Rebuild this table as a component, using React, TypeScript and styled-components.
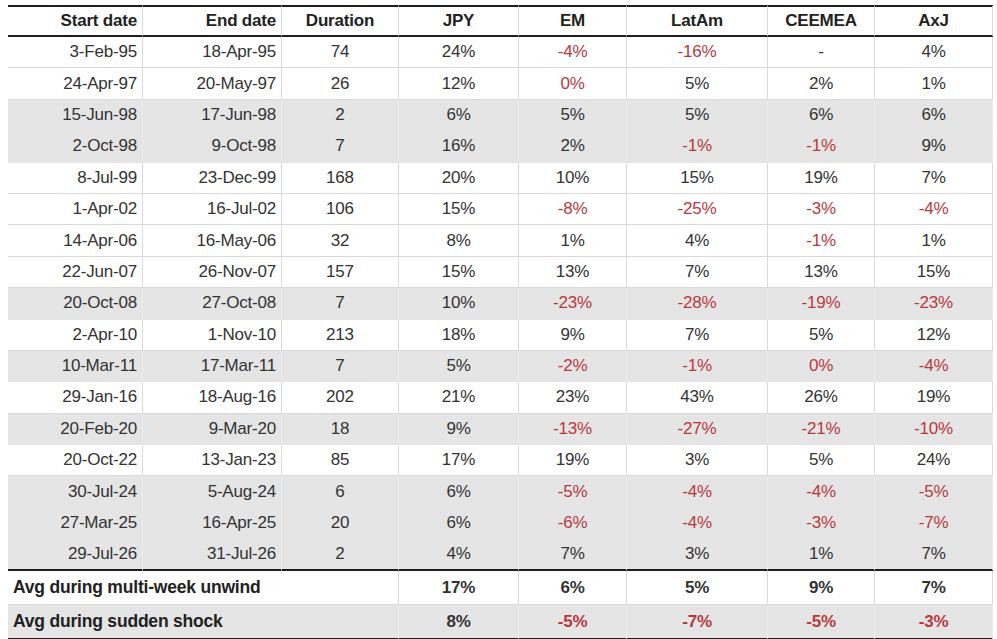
import React from 'react';
import styled, { createGlobalStyle } from 'styled-components';

const GlobalStyle = createGlobalStyle`
  html, body {
    margin: 0;
    padding: 0;
    background: #ffffff;
  }
  body {
    font-family: 'Liberation Sans', Arial, sans-serif;
    color: #333333;
  }
`;

const Page = styled.div`
  padding: 5px 4px 0 8px;
`;

const Table = styled.table`
  width: 985px;
  table-layout: fixed;
  border-collapse: separate;
  border-spacing: 0;
  font-size: 17px;
  letter-spacing: -0.2px;
`;

const HeadCell = styled.th<{ $align?: 'right' | 'center' }>`
  height: 28px;
  padding: 0 ${(p) => (p.$align === 'right' ? '5px' : '0')} 0 0;
  text-align: ${(p) => p.$align || 'center'};
  font-weight: bold;
  color: #222222;
  border-top: 2px solid #1e1e1e;
  border-bottom: 2px solid #1e1e1e;
  border-right: 1px solid #dadada;
`;

const Row = styled.tr<{ $shaded?: boolean; $last?: boolean }>`
  background: ${(p) => (p.$shaded ? '#e5e5e5' : '#ffffff')};
  td {
    height: ${(p) => (p.$last ? '30px' : '30.4px')};
    border-right: 1px solid ${(p) => (p.$shaded ? '#ececec' : '#dadada')};
    border-bottom: ${(p) =>
      p.$last ? '2px solid #1e1e1e' : `1px solid ${p.$shaded ? '#e5e5e5' : '#dadada'}`};
  }
`;

const Cell = styled.td<{ $align?: 'right' | 'center'; $neg?: boolean }>`
  padding: 0 ${(p) => (p.$align === 'right' ? '5px' : '0')} 0 0;
  text-align: ${(p) => p.$align || 'center'};
  color: ${(p) => (p.$neg ? '#b8393d' : '#333333')};
  white-space: nowrap;
`;

const AvgRow = styled.tr<{ $shaded?: boolean; $last?: boolean }>`
  background: ${(p) => (p.$shaded ? '#e5e5e5' : '#ffffff')};
  td {
    height: 31px;
    font-weight: bold;
    border-right: 1px solid ${(p) => (p.$shaded ? '#ececec' : '#dadada')};
    border-bottom: ${(p) =>
      p.$last ? '2px solid #1e1e1e' : `1px solid ${p.$shaded ? '#e5e5e5' : '#dadada'}`};
  }
`;

const AvgLabel = styled.td`
  padding-left: 5px !important;
  text-align: left;
  color: #222222;
  font-size: 17.5px;
`;

type DataRow = {
  start: string;
  end: string;
  days: string;
  values: string[];
  shaded?: boolean;
};

const rows: DataRow[] = [
  { start: '3-Feb-95', end: '18-Apr-95', days: '74', values: ['24%', '-4%', '-16%', '-', '4%'] },
  { start: '24-Apr-97', end: '20-May-97', days: '26', values: ['12%', '0%', '5%', '2%', '1%'] },
  { start: '15-Jun-98', end: '17-Jun-98', days: '2', values: ['6%', '5%', '5%', '6%', '6%'], shaded: true },
  { start: '2-Oct-98', end: '9-Oct-98', days: '7', values: ['16%', '2%', '-1%', '-1%', '9%'], shaded: true },
  { start: '8-Jul-99', end: '23-Dec-99', days: '168', values: ['20%', '10%', '15%', '19%', '7%'] },
  { start: '1-Apr-02', end: '16-Jul-02', days: '106', values: ['15%', '-8%', '-25%', '-3%', '-4%'] },
  { start: '14-Apr-06', end: '16-May-06', days: '32', values: ['8%', '1%', '4%', '-1%', '1%'] },
  { start: '22-Jun-07', end: '26-Nov-07', days: '157', values: ['15%', '13%', '7%', '13%', '15%'] },
  { start: '20-Oct-08', end: '27-Oct-08', days: '7', values: ['10%', '-23%', '-28%', '-19%', '-23%'], shaded: true },
  { start: '2-Apr-10', end: '1-Nov-10', days: '213', values: ['18%', '9%', '7%', '5%', '12%'] },
  { start: '10-Mar-11', end: '17-Mar-11', days: '7', values: ['5%', '-2%', '-1%', '0%', '-4%'], shaded: true },
  { start: '29-Jan-16', end: '18-Aug-16', days: '202', values: ['21%', '23%', '43%', '26%', '19%'] },
  { start: '20-Feb-20', end: '9-Mar-20', days: '18', values: ['9%', '-13%', '-27%', '-21%', '-10%'], shaded: true },
  { start: '20-Oct-22', end: '13-Jan-23', days: '85', values: ['17%', '19%', '3%', '5%', '24%'] },
  { start: '30-Jul-24', end: '5-Aug-24', days: '6', values: ['6%', '-5%', '-4%', '-4%', '-5%'], shaded: true },
  { start: '27-Mar-25', end: '16-Apr-25', days: '20', values: ['6%', '-6%', '-4%', '-3%', '-7%'], shaded: true },
  { start: '29-Jul-26', end: '31-Jul-26', days: '2', values: ['4%', '7%', '3%', '1%', '7%'], shaded: true },
];

const averages = [
  { label: 'Avg during multi-week unwind', values: ['17%', '6%', '5%', '9%', '7%'] },
  { label: 'Avg during sudden shock', values: ['8%', '-5%', '-7%', '-5%', '-3%'], shaded: true },
];

const widths = [135, 139, 117, 120, 108, 141, 107, 118];
const currencies = ['JPY', 'EM', 'LatAm', 'CEEMEA', 'AxJ'];

// the source paints zero readings red too, so 0% counts as negative here
const isNeg = (v: string) => (v.startsWith('-') && v.length > 1) || v === '0%';

export default function App() {
  return (
    <Page>
      <GlobalStyle />
      <Table>
        <colgroup>
          {widths.map((w, i) => (
            <col key={i} style={{ width: w }} />
          ))}
        </colgroup>
        <thead>
          <tr>
            <HeadCell $align='right'>Start date</HeadCell>
            <HeadCell $align='right'>End date</HeadCell>
            <HeadCell>Duration</HeadCell>
            {currencies.map((c) => (
              <HeadCell key={c}>{c}</HeadCell>
            ))}
          </tr>
        </thead>
        <tbody>
          {rows.map((r, i) => (
            <Row key={r.start} $shaded={r.shaded} $last={i === rows.length - 1}>
              <Cell $align='right'>{r.start}</Cell>
              <Cell $align='right'>{r.end}</Cell>
              <Cell>{r.days}</Cell>
              {r.values.map((v, j) => (
                <Cell key={j} $neg={isNeg(v)}>
                  {v}
                </Cell>
              ))}
            </Row>
          ))}
          {averages.map((a, i) => (
            <AvgRow key={a.label} $shaded={a.shaded} $last={i === averages.length - 1}>
              <AvgLabel colSpan={3}>{a.label}</AvgLabel>
              {a.values.map((v, j) => (
                <Cell key={j} $neg={isNeg(v)}>
                  {v}
                </Cell>
              ))}
            </AvgRow>
          ))}
        </tbody>
      </Table>
    </Page>
  );
}
